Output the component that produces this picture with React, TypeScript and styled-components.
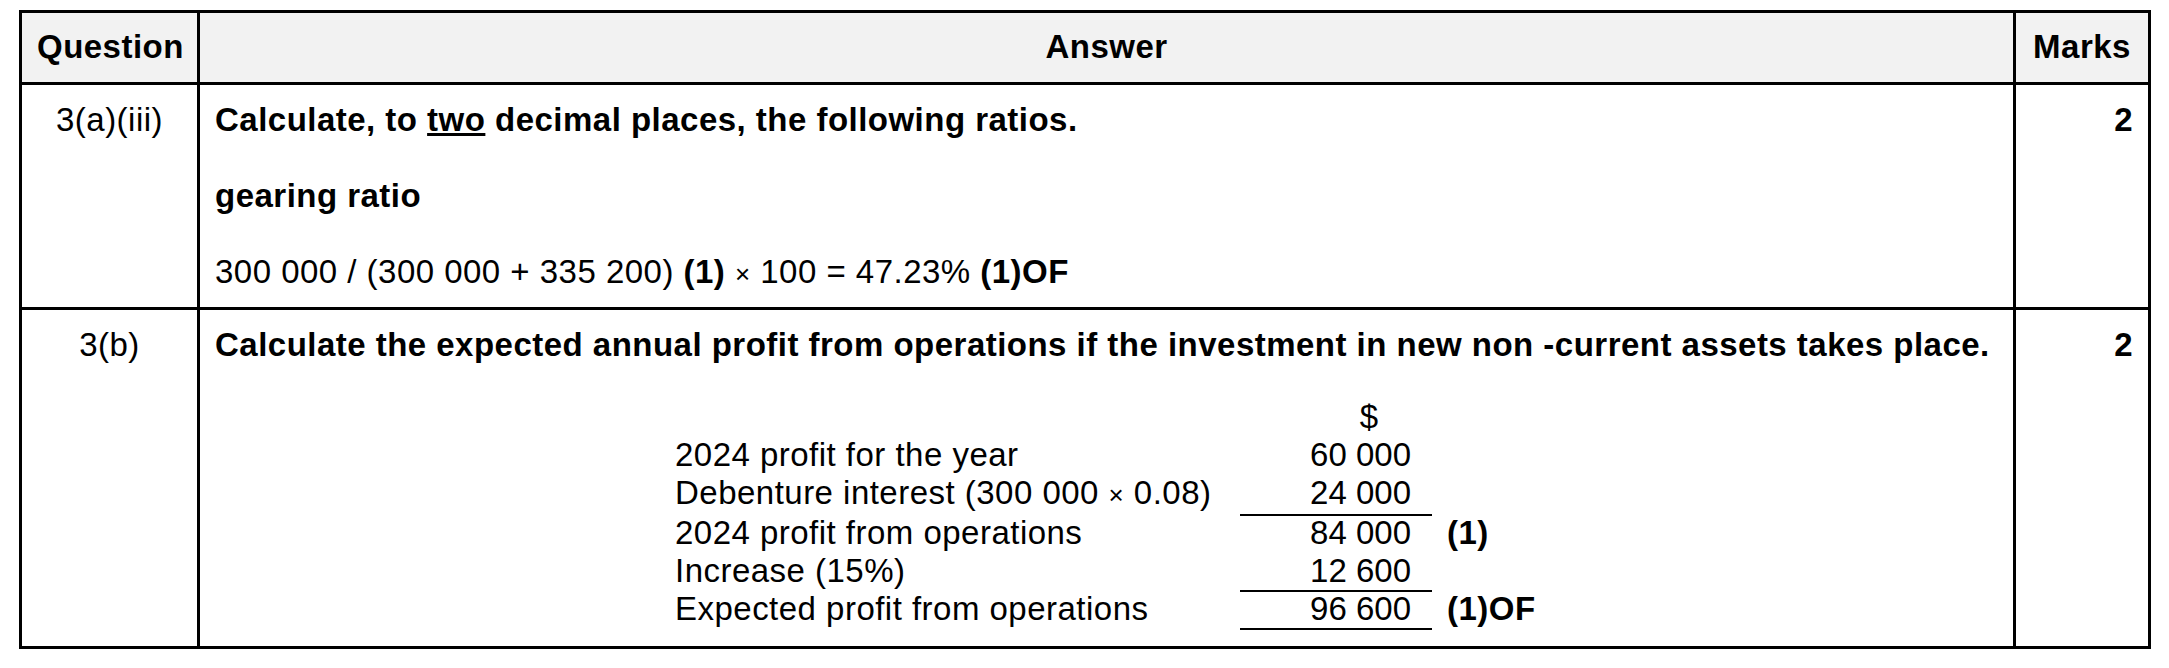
import styled, { createGlobalStyle } from "styled-components";

const GlobalStyle = createGlobalStyle`
  html, body {
    margin: 0;
    padding: 0;
    background: #fff;
  }

  body {
    font-family: "Liberation Sans", Arial, sans-serif;
    color: #000;
  }
`;

const StyledPage = styled.main`
  padding: 10px 0 0 19px;
`;

const StyledTable = styled.section`
  display: grid;
  grid-template-columns: 178px 1816px 132px;
  grid-template-rows: 72px 225px 336px;
  width: 2132px;
  box-sizing: border-box;
  border: 3px solid #000;
  font-size: 33px;
  line-height: 38px;
  letter-spacing: 0.48px;
`;

type CellProps = {
  $head?: boolean;
  $align?: "left" | "center" | "right";
  $divider?: boolean;
  $lastRow?: boolean;
};

const StyledCell = styled.div<CellProps>`
  box-sizing: border-box;
  padding: ${(p) => (p.$head ? "15px 15px 0" : "16px 15px")};
  background: ${(p) => (p.$head ? "#f2f2f2" : "#fff")};
  font-weight: ${(p) => (p.$head ? 700 : 400)};
  text-align: ${(p) => p.$align ?? "left"};
  border-right: ${(p) => (p.$divider ? "3px solid #000" : "none")};
  border-bottom: ${(p) => (p.$lastRow ? "none" : "3px solid #000")};
  white-space: nowrap;
`;

const StyledLine = styled.p`
  margin: 0;

  & + & {
    margin-top: 38px;
  }
`;

const StyledMark = styled.span`
  font-weight: 700;
`;

const StyledTimes = styled.span`
  font-size: 26px;
`;

const StyledCalc = styled.div`
  display: grid;
  grid-template-columns: 565px 192px auto;
  margin: 34px 0 0 460px;
  line-height: 38px;
`;

const StyledLabel = styled.span``;

const StyledAmount = styled.span<{ $rule?: boolean; $heading?: boolean }>`
  text-align: right;
  letter-spacing: 0;
  padding-right: ${(p) => (p.$heading ? "54px" : "21px")};
  border-bottom: ${(p) => (p.$rule ? "2px solid #000" : "none")};
  margin-bottom: ${(p) => (p.$rule ? "-2px" : "0")};
`;

const StyledCalcMark = styled.span`
  padding-left: 15px;
  font-weight: 700;
`;

type CalcRow = {
  label: string;
  amount: string;
  mark?: string;
  rule?: boolean;
  heading?: boolean;
};

const calcRows: CalcRow[] = [
  { label: "", amount: "$", heading: true },
  { label: "2024 profit for the year", amount: "60 000" },
  { label: "Debenture interest (300 000 × 0.08)", amount: "24 000", rule: true },
  { label: "2024 profit from operations", amount: "84 000", mark: "(1)" },
  { label: "Increase (15%)", amount: "12 600", rule: true },
  { label: "Expected profit from operations", amount: "96 600", mark: "(1)OF", rule: true },
];

function renderLabel(label: string) {
  if (!label.includes("×")) return label;
  const [before, after] = label.split("×");
  return (
    <>
      {before}
      <StyledTimes>×</StyledTimes>
      {after}
    </>
  );
}

function App() {
  return (
    <StyledPage>
      <GlobalStyle />
      <StyledTable>
        <StyledCell $head $align="center" $divider>
          Question
        </StyledCell>
        <StyledCell $head $align="center" $divider>
          Answer
        </StyledCell>
        <StyledCell $head $align="center">
          Marks
        </StyledCell>

        <StyledCell $align="center" $divider>
          3(a)(iii)
        </StyledCell>
        <StyledCell $divider>
          <StyledLine>
            <StyledMark>
              Calculate, to <u>two</u> decimal places, the following ratios.
            </StyledMark>
          </StyledLine>
          <StyledLine>
            <StyledMark>gearing ratio</StyledMark>
          </StyledLine>
          <StyledLine>
            300 000 / (300 000 + 335 200) <StyledMark>(1)</StyledMark>{" "}
            <StyledTimes>×</StyledTimes> 100 = 47.23%{" "}
            <StyledMark>(1)OF</StyledMark>
          </StyledLine>
        </StyledCell>
        <StyledCell $align="right">
          <StyledMark>2</StyledMark>
        </StyledCell>

        <StyledCell $align="center" $divider $lastRow>
          3(b)
        </StyledCell>
        <StyledCell $divider $lastRow>
          <StyledLine>
            <StyledMark>
              Calculate the expected annual profit from operations if the
              investment in new non -current assets takes place.
            </StyledMark>
          </StyledLine>
          <StyledCalc>
            {calcRows.map((row) => [
              <StyledLabel key={`${row.amount}-label`}>
                {renderLabel(row.label)}
              </StyledLabel>,
              <StyledAmount
                key={`${row.amount}-amount`}
                $rule={row.rule}
                $heading={row.heading}
              >
                {row.amount}
              </StyledAmount>,
              <StyledCalcMark key={`${row.amount}-mark`}>
                {row.mark ?? ""}
              </StyledCalcMark>,
            ])}
          </StyledCalc>
        </StyledCell>
        <StyledCell $align="right" $lastRow>
          <StyledMark>2</StyledMark>
        </StyledCell>
      </StyledTable>
    </StyledPage>
  );
}

export default App;
